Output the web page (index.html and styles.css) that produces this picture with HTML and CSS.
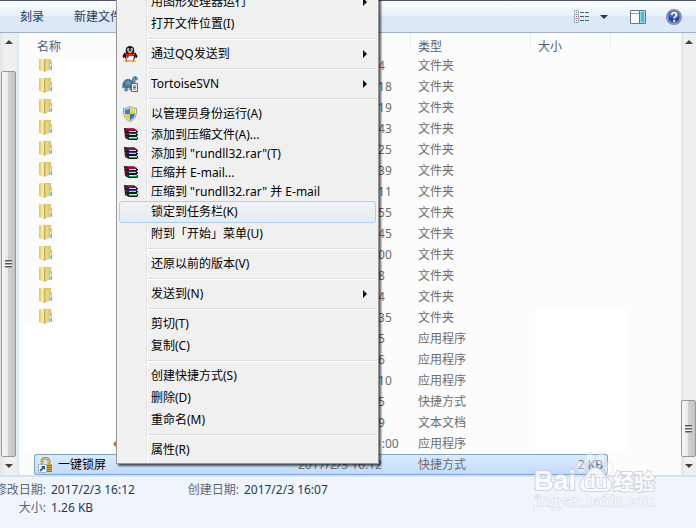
FILE: index.html
```html
<!DOCTYPE html>
<html lang="zh-CN">
<head>
    <meta charset="UTF-8">
    <meta name="viewport" content="width=device-width, initial-scale=1.0">
    <title>文件列表</title>
    <link rel="stylesheet" href="styles.css">
</head>
<body>
    <!-- shared icons -->
    <svg class="sprite" aria-hidden="true">
        <linearGradient id="gold"><stop offset="0" stop-color="#f6edaa"/><stop offset="1" stop-color="#dcc462"/></linearGradient>
        <linearGradient id="flap"><stop offset="0" stop-color="#dcc462"/><stop offset=".6" stop-color="#f7eeb4"/><stop offset="1" stop-color="#e6d27a"/></linearGradient>
        <symbol id="folder" viewBox="0 0 14 16">
            <path d="M1 1h11v4h1v9h-2l-5 1z" fill="#dcc566"/>
            <path d="M5 2h6v12H5z" fill="url(#gold)"/>
            <path d="M0 1.500L5 .5l1 1V15l-1 1-5-2z" fill="url(#flap)"/>
            <path d="M5 2l1.500-.5V15L5 16z" fill="#c9ae4c"/>
            <path d="M11 8h1v6h-1z" fill="#e9f2f8"/>
            <path d="M11.500 10.500h1.200v3h-1.200z" fill="#3e9be0"/>
        </symbol>
        <symbol id="rar" viewBox="0 0 14 14">
            <path d="M0 1h9l4 2v1l1 0v1l-1 1v1h1v1l-1 1v1h1v2l-1 1H5L1 11z" fill="#191919"/>
            <path d="M1 1h8l3 1.500H4z" fill="#b8305c"/>
            <path d="M4 3h9v1H4z" fill="#8c1038"/>
            <path d="M5 4h7v1H5z" fill="#f0c8d4"/>
            <path d="M4 6h9v1H4z" fill="#3a3ab0"/>
            <path d="M5 7h7v1H5z" fill="#a8d0f8"/>
            <path d="M5 10h8v1H5z" fill="#a6ffd9"/>
            <path d="M5 11h8v1H5z" fill="#18a468"/>
            <path d="M1 2l3 1.500v1L1 3.500zM1 5.500l3 1.500v1L1 7zM1 8.500l3 1.500v1L1 10z" fill="#8a1a3a"/>
        </symbol>
    </svg>

    <header class="toolbar">
        <button type="button">刻录</button>
        <button type="button">新建文件夹</button>
        <div class="tools">
            <button type="button" class="views" aria-label="更改视图">
                <svg width="16" height="14" viewBox="0 0 16 14">
                    <g fill="#fff" stroke="#8a97a8"><rect x=".5" y=".5" width="4" height="4" rx="1"/><rect x=".5" y="4.500" width="4" height="4" rx="1"/><rect x=".5" y="8.500" width="4" height="4" rx="1"/></g>
                    <path d="M2 2h1v1H2zM2 10h1v1H2z" fill="#45668c"/>
                    <path d="M2 6h1v1H2z" fill="#d03030"/>
                    <path d="M6 2.500h4m1 0h4M6 6.500h4m1 0h4M6 10.500h4m1 0h4" stroke="#4c607a"/>
                </svg>
                <svg width="8" height="4" viewBox="0 0 8 4"><path d="M0 0h8L4 4z" fill="#1e395b"/></svg>
            </button>
            <button type="button" class="pane" aria-label="预览窗格">
                <svg width="16" height="14" viewBox="0 0 16 14">
                    <path d="M.5.5h15v13H.5z" fill="#fff" stroke="#5f7a98"/>
                    <path d="M1 3.500h9" stroke="#8ba0b8"/>
                    <path d="M10.500 1.500h4v11h-4z" fill="#62b4d0" stroke="#8ae0ee"/>
                    <path d="M9.500 1v12" stroke="#4c7896"/>
                </svg>
            </button>
            <button type="button" aria-label="帮助">
                <svg width="16" height="16" viewBox="0 0 16 16">
                    <circle cx="8" cy="8" r="7.300" fill="#2348b5" stroke="#8d8d94" stroke-width="1.400"/>
                    <circle cx="8" cy="8" r="6.200" fill="none" stroke="#d6d9e4" stroke-width=".7"/>
                    <path d="M2.500 7a5.500 5.500 0 0 1 11 0c-3 2-8 2-11 0z" fill="#4468cc"/>
                    <path d="M5.700 6c0-3.200 4.800-3 4.800-.2C10.500 7.600 8.200 7.600 8.200 9.500" fill="none" stroke="#fff" stroke-width="1.800"/>
                    <circle cx="8.200" cy="11.900" r="1.100" fill="#fff"/>
                </svg>
            </button>
        </div>
    </header>

    <main class="content">
        <div class="scrollbar tree">
            <button type="button" class="up" aria-label="向上"></button>
            <div class="track"><div class="thumb"><i></i></div></div>
            <button type="button" class="down" aria-label="向下"></button>
        </div>

        <section class="files">
            <table>
                <colgroup><col class="c-name"><col class="c-date"><col class="c-type"><col class="c-size"><col class="c-end"></colgroup>
                <thead>
                    <tr><th>名称</th><th></th><th>类型</th><th>大小</th><th></th></tr>
                </thead>
                <tbody>
                    <tr class="cut"><td><svg class="folder"><use href="#folder"/></svg></td><td>2017/2/3 16:14</td><td>文件夹</td><td></td></tr>
                    <tr><td><svg class="folder"><use href="#folder"/></svg></td><td>2017/1/13 15:18</td><td>文件夹</td><td></td></tr>
                    <tr><td><svg class="folder"><use href="#folder"/></svg></td><td>2017/1/13 15:19</td><td>文件夹</td><td></td></tr>
                    <tr><td><svg class="folder"><use href="#folder"/></svg></td><td>2017/1/13 10:43</td><td>文件夹</td><td></td></tr>
                    <tr><td><svg class="folder"><use href="#folder"/></svg></td><td>2017/1/16 11:25</td><td>文件夹</td><td></td></tr>
                    <tr><td><svg class="folder"><use href="#folder"/></svg></td><td>2017/1/16 12:39</td><td>文件夹</td><td></td></tr>
                    <tr><td><svg class="folder"><use href="#folder"/></svg></td><td>2017/1/18 16:11</td><td>文件夹</td><td></td></tr>
                    <tr><td><svg class="folder"><use href="#folder"/></svg></td><td>2017/1/18 16:55</td><td>文件夹</td><td></td></tr>
                    <tr><td><svg class="folder"><use href="#folder"/></svg></td><td>2017/1/20 14:45</td><td>文件夹</td><td></td></tr>
                    <tr><td><svg class="folder"><use href="#folder"/></svg></td><td>2017/1/20 15:00</td><td>文件夹</td><td></td></tr>
                    <tr><td><svg class="folder"><use href="#folder"/></svg></td><td>2017/2/3 10:18</td><td>文件夹</td><td></td></tr>
                    <tr><td><svg class="folder"><use href="#folder"/></svg></td><td>2017/2/3 11:24</td><td>文件夹</td><td></td></tr>
                    <tr><td><svg class="folder"><use href="#folder"/></svg></td><td>2017/1/22 16:35</td><td>文件夹</td><td></td></tr>
                    <tr><td></td><td>2017/2/3 10:05</td><td>应用程序</td><td></td></tr>
                    <tr><td></td><td>2017/2/3 10:06</td><td>应用程序</td><td></td></tr>
                    <tr><td></td><td>2017/1/22 17:10</td><td>应用程序</td><td></td></tr>
                    <tr><td></td><td>2017/2/3 16:05</td><td>快捷方式</td><td></td></tr>
                    <tr><td></td><td>2017/2/3 16:09</td><td>文本文档</td><td></td></tr>
                    <tr class="app"><td></td><td>2016/12/20 11:00</td><td>应用程序</td><td></td></tr>
                    <tr class="selected">
                        <td>
                            <svg class="lock" viewBox="0 0 16 16">
                                <path d="M4 8V4.500a3.500 3.500 0 0 1 7 0V8" fill="none" stroke="#a87d20" stroke-width="2.600"/>
                                <path d="M4 8V4.500a3.500 3.500 0 0 1 7 0V8" fill="none" stroke="#edd58a" stroke-width="1"/>
                                <path d="M2 7h12v8H2z" fill="#d9a738"/>
                                <path d="M9 8.500h5M9 10.500h5M9 12.500h5M9 14.500h5" stroke="#9a7014"/>
                                <path d="M.5 7.500h8v8h-8z" fill="#fff" stroke="#a7b4c4"/>
                                <path d="M2 14L5.500 10.500" fill="none" stroke="#2458a8" stroke-width="1.800"/>
                                <path d="M3 9h4v4z" fill="#2458a8"/>
                            </svg>
                            <span class="name">一键锁屏</span>
                        </td>
                        <td>2017/2/3 16:12</td><td>快捷方式</td><td>2 KB</td>
                    </tr>
                </tbody>
            </table>
        </section>

        <div class="scrollbar">
            <button type="button" class="up" aria-label="向上"></button>
            <div class="track"><div class="thumb"><i></i></div></div>
            <button type="button" class="down" aria-label="向下"></button>
        </div>
    </main>

    <footer class="details">
        <dl>
            <dt>修改日期:</dt><dd>2017/2/3 16:12</dd>
            <dt>大小:</dt><dd>1.26 KB</dd>
        </dl>
        <dl>
            <dt>创建日期:</dt><dd>2017/2/3 16:07</dd>
        </dl>
    </footer>

    <ul class="menu">
        <li><button type="button" class="more">用图形处理器运行</button></li>
        <li><button type="button">打开文件位置(I)</button></li>
        <li class="sep"></li>
        <li><button type="button" class="more">
            <svg viewBox="0 0 16 16">
                <path d="M3 6L.5 10l.7 2L4 10zM13 6l2.500 4-.7 2L12 10z" fill="#111"/>
                <ellipse cx="8" cy="10" rx="5.500" ry="5" fill="#111"/>
                <ellipse cx="8" cy="4.500" rx="4.300" ry="4.500" fill="#111"/>
                <ellipse cx="8" cy="11.200" rx="3.800" ry="3.500" fill="#fff"/>
                <ellipse cx="6.300" cy="3.600" rx="1.100" ry="1.500" fill="#fff"/><ellipse cx="9.700" cy="3.600" rx="1.100" ry="1.500" fill="#fff"/>
                <path d="M6.300 3.300h.8v1h-.8zM9 3.300h.8v1H9z" fill="#111"/>
                <ellipse cx="8" cy="6" rx="2.800" ry="1" fill="#f5a020"/>
                <path d="M3 7.200c3 1.500 7 1.500 10 0v2c-2 1-5 1.200-6.500 1V12H4.500V9.500L3 9z" fill="#e01818"/>
                <ellipse cx="4.800" cy="15" rx="2.800" ry="1" fill="#f09a18"/><ellipse cx="11.200" cy="15" rx="2.800" ry="1" fill="#f09a18"/>
            </svg>通过QQ发送到</button></li>
        <li class="sep"></li>
        <li><button type="button" class="more">
            <svg viewBox="0 0 16 16">
                <path d="M10 7c0-3 0-5.500 2-6.300C14 0 16 1.500 15.500 3.500L13 4v4z" fill="#6f97b5" stroke="#47708e" stroke-width=".7"/>
                <path d="M13 1.500h1v1h-1z" fill="#222"/>
                <path d="M2 10L.3 11v1L3 11.500zM3 11l-.5 4h3l.5-3zM7.500 11v3h2v-3z" fill="#6f93ad" stroke="#47708e" stroke-width=".5"/>
                <path d="M.8 10c0-4 2-6.500 5.200-6.500S12 6 12 10c-3 2-8 2-11.200 0z" fill="#4d7898" stroke="#345a78" stroke-width=".8"/>
                <path d="M4 6l2-1.500L8.500 6 8 8.500H4.500z" fill="#6d98b5"/>
                <path d="M9.500 7.500h6v8h-6z" fill="#eee" stroke="#666"/>
                <path d="M11 10h3M11 11.500h3M11 13h3" stroke="#555" stroke-width=".8"/>
            </svg>TortoiseSVN</button></li>
        <li class="sep"></li>
        <li><button type="button">
            <svg viewBox="0 0 16 16">
                <path d="M8 .5C6 2 3.500 2.300 1.500 2.300c-.5 6 1 10.700 6.500 13.200 5.500-2.500 7-7.200 6.500-13.200C12.500 2.300 10 2 8 .5z" fill="#e6e9ec" stroke="#8d9499"/>
                <path d="M8 2v6H3C2.700 6.500 2.700 5 2.800 3.600 5 3.500 6.500 3 8 2z" fill="#2c86dc"/>
                <path d="M8 2v6h5c.3-1.500.3-3 .2-4.400C11 3.500 9.500 3 8 2z" fill="#f8d02c"/>
                <path d="M3 8h5v6.200C5.300 12.900 3.700 11 3 8z" fill="#f8c820"/>
                <path d="M13 8H8v6.200c2.700-1.300 4.300-3.200 5-6.200z" fill="#2476c8"/>
            </svg>以管理员身份运行(A)</button></li>
        <li><button type="button" class="short"><svg viewBox="0 0 14 14"><use href="#rar"/></svg>添加到压缩文件(A)...</button></li>
        <li><button type="button" class="short"><svg viewBox="0 0 14 14"><use href="#rar"/></svg>添加到 "rundll32.rar"(T)</button></li>
        <li><button type="button" class="short"><svg viewBox="0 0 14 14"><use href="#rar"/></svg>压缩并 E-mail...</button></li>
        <li><button type="button" class="short"><svg viewBox="0 0 14 14"><use href="#rar"/></svg>压缩到 "rundll32.rar" 并 E-mail</button></li>
        <li><button type="button" class="active">锁定到任务栏(K)</button></li>
        <li><button type="button">附到「开始」菜单(U)</button></li>
        <li class="sep"></li>
        <li><button type="button">还原以前的版本(V)</button></li>
        <li class="sep"></li>
        <li><button type="button" class="more">发送到(N)</button></li>
        <li class="sep"></li>
        <li><button type="button">剪切(T)</button></li>
        <li><button type="button">复制(C)</button></li>
        <li class="sep"></li>
        <li><button type="button">创建快捷方式(S)</button></li>
        <li><button type="button">删除(D)</button></li>
        <li><button type="button">重命名(M)</button></li>
        <li class="sep"></li>
        <li><button type="button">属性(R)</button></li>
    </ul>

    <svg class="watermark" width="126" height="60" viewBox="0 0 126 60">
        <g class="mark">
            <text x="1" y="38" font-size="27">Bai</text>
            <g class="toes">
                <ellipse cx="48" cy="15" rx="4" ry="6"/>
                <ellipse cx="57" cy="7" rx="4" ry="6"/>
                <ellipse cx="68" cy="7" rx="4" ry="6"/>
                <ellipse cx="76" cy="16" rx="4" ry="6"/>
            </g>
            <path d="M62 16c-6 0-7 7-12 11-5 5-3 12 3 12h19c7 0 8-7 3-12-5-4-6-11-13-11z"/>
            <text x="51" y="36" font-size="19">du</text>
            <text x="80" y="37" font-size="21">经验</text>
            <text class="url" x="1" y="54" font-size="15">jingyan.baidu.com</text>
        </g>
    </svg>
</body>
</html>
```
FILE: styles.css
```css
* {
    box-sizing: border-box;
}

body {
    display: flex;
    flex-direction: column;
    height: 100vh;
    margin: 0;
    overflow: hidden;
    background-color: #fcfcfc;
    color: #000;
    font-family: "Noto Sans", "Noto Sans CJK SC", sans-serif;
    font-size: 12px;
    line-height: 18px;
}

button {
    margin: 0;
    padding: 0;
    border: none;
    background: none;
    color: inherit;
    font: inherit;
}

.sprite {
    position: absolute;
    width: 0;
    height: 0;
}

/* toolbar */
.toolbar {
    display: flex;
    align-items: center;
    gap: 30px;
    flex: none;
    height: 33px;
    padding: 0 14px 0 20px;
    border-top: 1px solid #4d566b;
    border-bottom: 1px solid #a0afc3;
    background: linear-gradient(#fafdff 0%, #e9f2fb 48%, #dce6f4 50%, #dde9f7 100%);
    color: #1e395b;
    white-space: nowrap;
}

.tools {
    display: flex;
    align-items: center;
    gap: 20px;
    margin-left: auto;
}

.tools button {
    display: flex;
    align-items: center;
}

.views {
    gap: 10px;
    margin-right: 2px;
}

/* file list */
.content {
    display: flex;
    flex: 1;
    min-height: 0;
}

.files {
    flex: 1;
    min-width: 0;
    overflow: hidden;
    padding-left: 15px;
    border-left: 1px solid #d3e4f4;
    background:
        linear-gradient(#fff, #fff) 35px 27px / 70px 392px no-repeat,
        linear-gradient(#fff, #fff) 3px 293px / 90px 125px no-repeat,
        linear-gradient(#fff, #fff) 516px 276px / 92px 142px no-repeat,
        #fcfcfc;
}

table {
    width: 577px;
    border-spacing: 0;
    table-layout: fixed;
    color: #6d6d6d;
}

.c-name { width: 257px; }
.c-date { width: 120px; }
.c-type { width: 120px; }
.c-size { width: 77px; }
.c-end { width: 3px; }

th, td {
    padding: 0 0 0 7px;
    text-align: left;
    white-space: nowrap;
    font-weight: normal;
}

th {
    height: 22px;
    padding-top: 5px;
    line-height: 17px;
    color: #4c607a;
    background: linear-gradient(#dde7f2, #e8eef5, #fcfcfc) right / 1px 100% no-repeat;
}

th:first-child {
    padding-left: 3px;
    background: none;
}

th:nth-child(4) {
    background: none;
}

td {
    height: 21px;
    line-height: 16px;
}

td:first-child {
    padding-left: 5px;
}

td:nth-child(2) {
    padding-left: 10px;
}

td:nth-child(4) {
    padding-right: 4px;
    text-align: right;
}

.folder, .lock {
    display: block;
    width: 14px;
    height: 16px;
}

.folder {
    margin-bottom: 3px;
}

.cut .folder {
    clip-path: inset(3px 0 0 0);
}

.app td:first-child {
    background: radial-gradient(circle at 82px 11px, #c07830 2px, transparent 3px);
}

.lock {
    float: left;
    width: 16px;
}

.name {
    margin-left: 4px;
    color: #000;
}

.selected td {
    border: solid #7da2ce;
    border-width: 1px 0;
    background: linear-gradient(#dcebfc, #c1dbfc);
}

.selected td:first-child {
    padding-left: 3px;
    border-left-width: 1px;
    border-radius: 3px 0 0 3px;
}

.selected td:nth-child(2) {
    padding-left: 7px;
}

.selected td:nth-child(4) {
    border-right-width: 1px;
    border-radius: 0 3px 3px 0;
}

/* scrollbars */
.scrollbar {
    display: flex;
    flex-direction: column;
    flex: none;
    width: 15px;
    background: linear-gradient(90deg, #e3e3e3, #f0f0f0 30%, #eee);
}

.tree {
    width: 18px;
    padding: 0 2px 0 1px;
}

.scrollbar button {
    display: flex;
    align-items: center;
    justify-content: center;
    height: 18px;
}

.up::before, .down::before {
    content: "";
    border: 4px solid transparent;
    border-top-width: 0;
    border-bottom-color: #404040;
}

.down::before {
    border-top: 4px solid #404040;
    border-bottom-width: 0;
}

.track {
    display: flex;
    flex: 1;
    flex-direction: column;
    justify-content: flex-end;
}

.thumb {
    display: flex;
    align-items: center;
    justify-content: center;
    height: 14%;
    border: 1px solid #979797;
    border-radius: 2px;
    background: linear-gradient(90deg, #f7f7f7, #e9e9eb 45%, #cfcfd3 50%, #c4c4c8);
}

.tree .thumb {
    height: 95%;
}

.thumb i {
    width: 7px;
    height: 8px;
    background: repeating-linear-gradient(#555 0 1px, #aaa 1px 2px, #f5f5f5 2px 3px);
}

/* details pane */
.details {
    display: flex;
    gap: 53px;
    flex: none;
    height: 53px;
    padding-top: 4px;
    border-top: 2px solid #d5e1ef;
    background-color: #f0f4fc;
}

dl {
    display: grid;
    grid-template-columns: 46px auto;
    grid-auto-rows: 18px;
    column-gap: 5px;
    margin: 0;
    white-space: nowrap;
}

dl + dl {
    grid-template-columns: 51px auto;
}

dt {
    display: flex;
    justify-content: flex-end;
    color: #5a6779;
}

dd {
    margin: 0;
    color: #1e395b;
}

/* context menu */
.menu {
    position: absolute;
    top: -12px;
    left: 116px;
    width: 263px;
    margin: 0;
    padding: 2px;
    border: 1px solid #979797;
    background: linear-gradient(90deg, #f1f1f1 29px, #e2e3e3 29px 30px, #fff 30px 31px, #f0f0f0 31px);
    box-shadow: 2px 2px 2px rgba(0, 0, 0, 0.65);
    list-style: none;
}

.menu button {
    display: block;
    position: relative;
    width: 257px;
    height: 22px;
    padding-left: 31px;
    border: 1px solid transparent;
    border-radius: 3px;
    line-height: 20px;
    text-align: left;
    white-space: nowrap;
}

.menu .short {
    height: 19px;
    line-height: 17px;
}

.menu .active {
    border-color: #aecff7;
    background: linear-gradient(rgba(240, 244, 250, 0.8), rgba(226, 234, 245, 0.8));
}

.menu svg {
    position: absolute;
    top: 2px;
    left: 2px;
    width: 16px;
    height: 16px;
}

.menu .short svg {
    top: 1px;
    left: 4px;
    width: 14px;
    height: 14px;
}

.more::after {
    content: "";
    position: absolute;
    top: 6px;
    right: 8px;
    border: 4px solid transparent;
    border-right-width: 0;
    border-left-color: #111;
}

.sep {
    height: 8px;
    margin-left: 28px;
    background: linear-gradient(#e0e0e0 50%, #fff 50%) 0 3px / 100% 2px no-repeat;
}

/* watermark */
.watermark {
    position: absolute;
    right: 37px;
    bottom: 16px;
}

.mark {
    fill: #fff;
    stroke: #c9ced8;
    stroke-width: 2;
    paint-order: stroke;
    font-family: "Liberation Sans", "Noto Sans CJK SC", sans-serif;
    font-weight: bold;
    opacity: 0.8;
}

.mark .toes {
    fill-opacity: 0.5;
    stroke-width: 1;
    stroke-opacity: 0.6;
}

.mark .url {
    stroke-width: 1;
    font-weight: normal;
}
```
